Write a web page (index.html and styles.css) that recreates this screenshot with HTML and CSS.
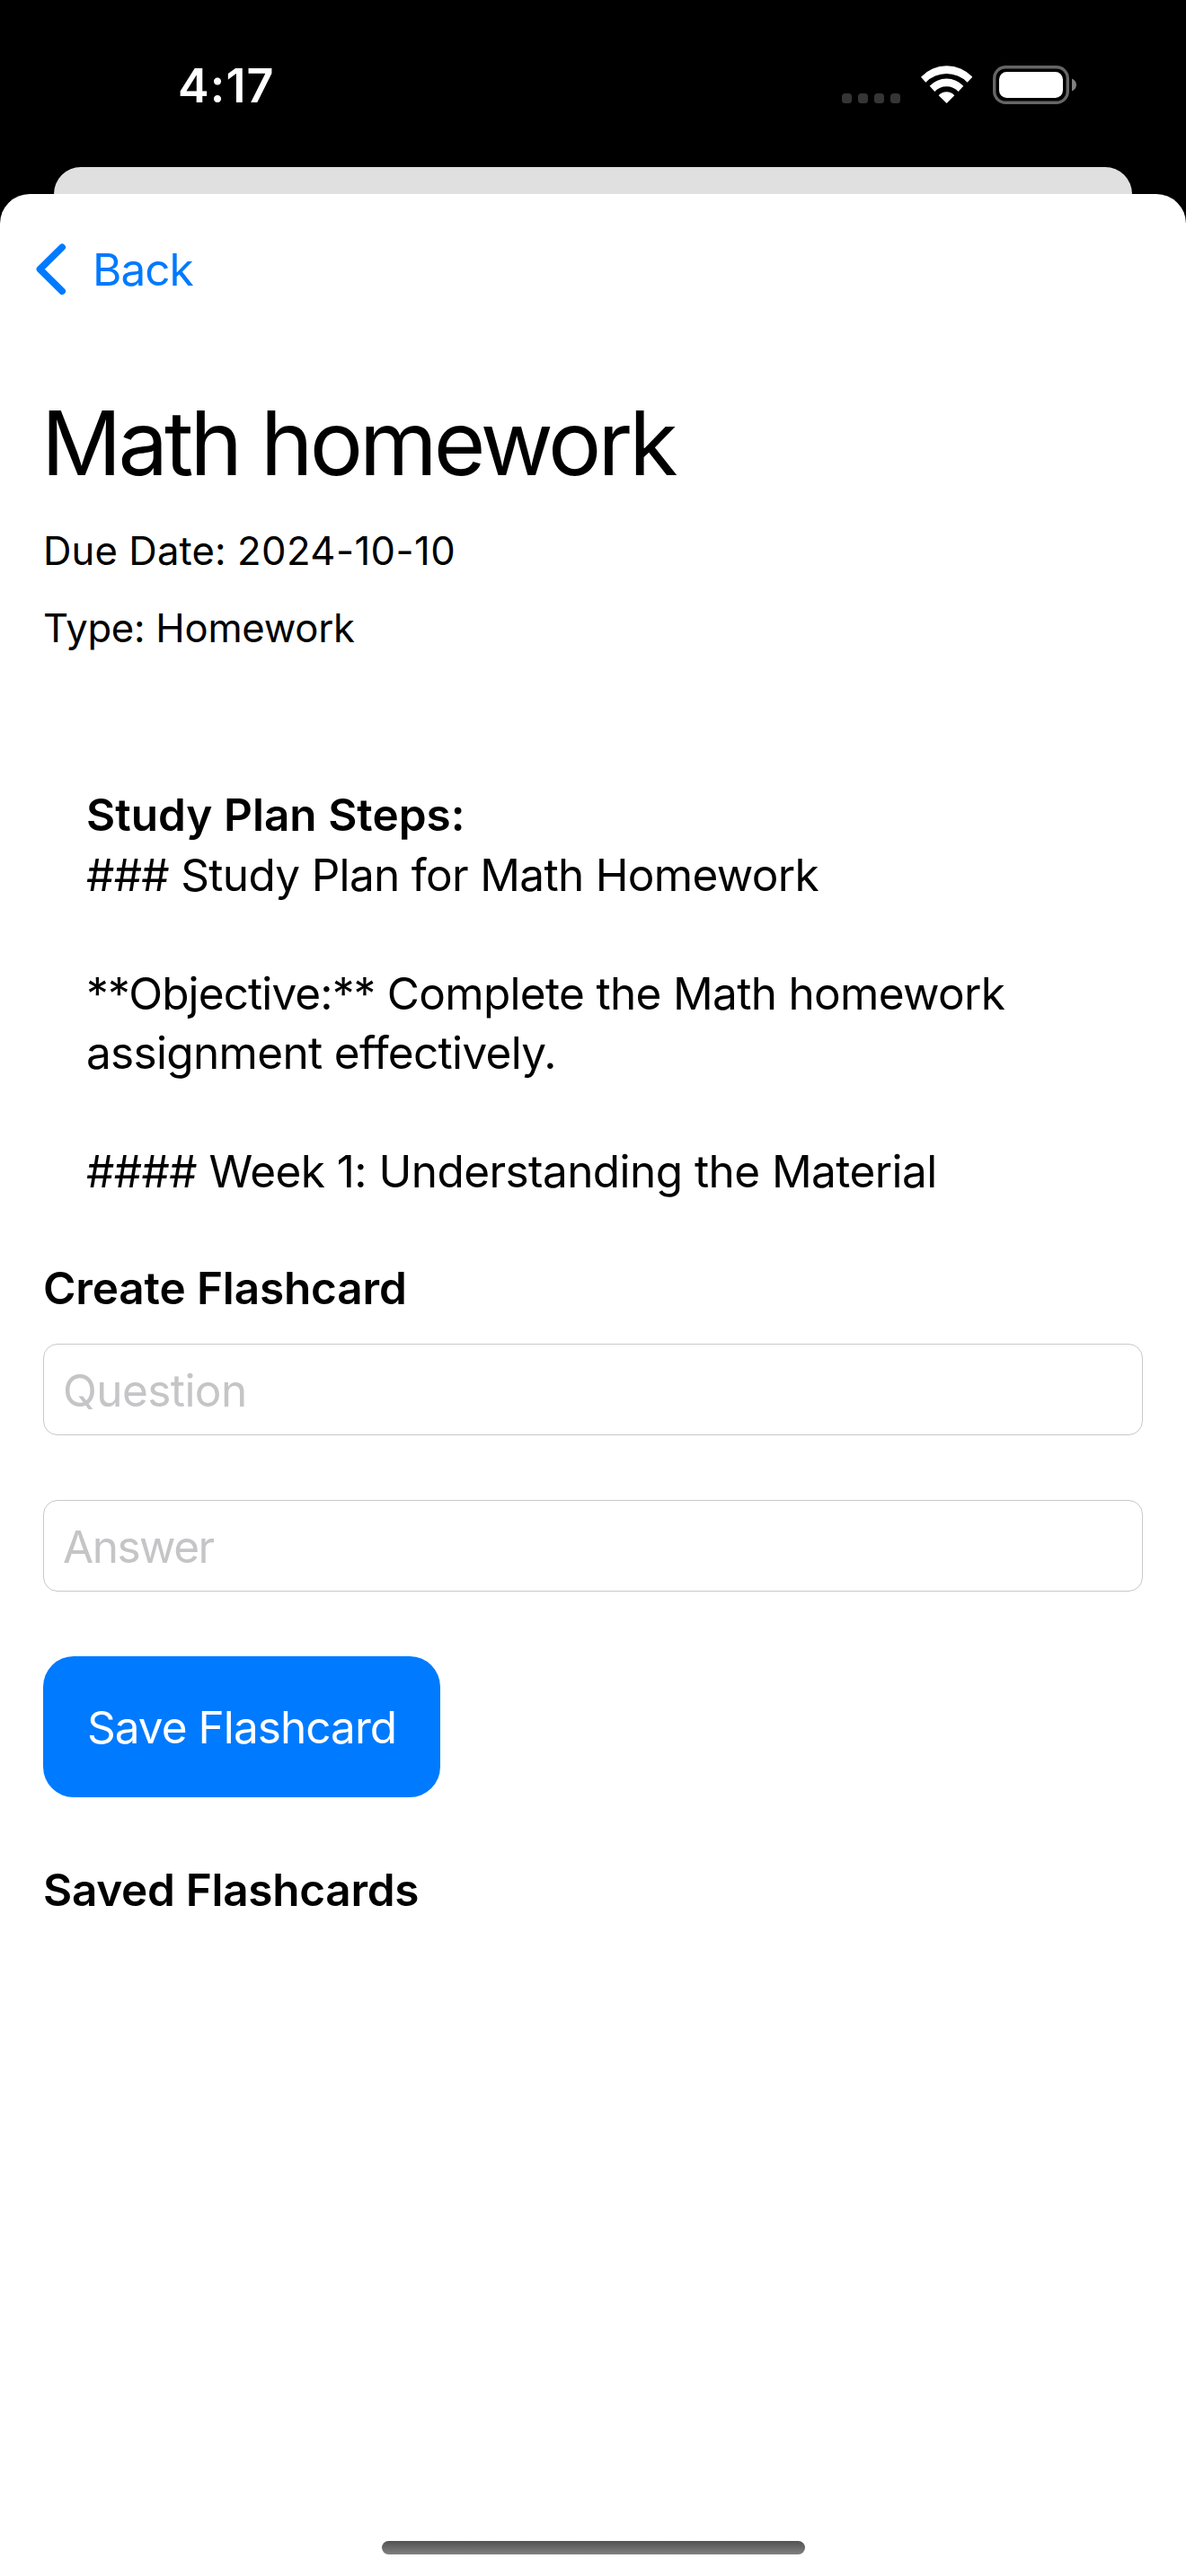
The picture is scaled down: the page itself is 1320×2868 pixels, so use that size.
FILE: index.html
```html
<!DOCTYPE html>
<html lang="en">
<head>
<meta charset="utf-8">
<title>Math homework</title>
<link rel="stylesheet" href="styles.css">
</head>
<body>
<div class="screen">
  <header class="status-bar">
    <span class="time">4:17</span>
    <div class="indicators">
      <div class="signal"><i class="signal-dot"></i><i class="signal-dot"></i><i class="signal-dot"></i><i class="signal-dot"></i></div>
      <svg class="wifi" viewBox="375 99 172 126" fill="#fff" aria-hidden="true">
        <path d="M375 137A118 118 0 0 1 547 137L530 155A98 98 0 0 0 391 155Z"/>
        <path d="M404 167A78 78 0 0 1 517 167L500 186A54 54 0 0 0 421 186Z"/>
        <path d="M434 199A35 35 0 0 1 487 199L461 225Z"/>
      </svg>
      <svg class="battery" viewBox="0 0 93 43" aria-hidden="true">
        <rect x="1.7" y="1.7" width="81.6" height="39.6" rx="12.5" fill="none" stroke="#666" stroke-width="3.4"/>
        <rect x="7" y="7" width="71" height="29" rx="8.5" fill="#fff"/>
        <path d="M88 14.5C91 15.7 93 18.4 93 21.5S91 27.3 88 28.5Z" fill="#808080"/>
      </svg>
    </div>
  </header>
  <div class="sheet-behind"></div>
  <main class="sheet">
    <nav class="nav">
      <svg class="chevron" viewBox="0 0 34 58" fill="none" stroke="#007aff" stroke-width="7.6" stroke-linecap="round" stroke-linejoin="round" aria-hidden="true"><path d="M29.2 4.3L4.4 28.8L29.2 53.2"/></svg>
      <a class="back">Back</a>
    </nav>
    <h1 class="title">Math homework</h1>
    <p class="meta due"><span class="due-label">Due Date: </span>2024-10-10</p>
    <p class="meta type">Type: Homework</p>
    <section class="plan">
      <h2 class="plan-heading">Study Plan Steps:</h2>
      <div class="plan-text">### Study Plan for Math Homework

<span class="objective">**Objective:**</span> Complete the Math homework
assignment effectively.

<span class="week">#### Week 1: Understanding the Material</span></div>
    </section>
    <h2 class="heading">Create Flashcard</h2>
    <form class="form">
      <input class="field question" type="text" placeholder="Question">
      <input class="field answer" type="text" placeholder="Answer">
      <button class="save" type="button">Save Flashcard</button>
    </form>
    <h2 class="heading saved">Saved Flashcards</h2>
    <div class="home-indicator"></div>
  </main>
</div>
</body>
</html>
```
FILE: styles.css
```css
* { box-sizing: border-box; }

body {
  margin: 0;
  background: #000;
  color: #000;
  font-family: Inter, "Liberation Sans", sans-serif;
  font-size: 49.5px;
  line-height: 60px;
}

h1, h2, p { margin: 0; }
svg { display: block; }

.screen {
  display: flex;
  flex-direction: column;
  width: 1320px;
  height: 2868px;
  background: #000;
}

.status-bar {
  display: flex;
  justify-content: space-between;
  height: 186px;
  padding: 66px 122px 0 198px;
  color: #fff;
}
.time { font-size: 52px; font-weight: 600; letter-spacing: 1.1px; }
.indicators { display: flex; align-items: flex-start; padding-top: 7px; }
.signal { display: flex; gap: 7px; margin: 31px 23px 0 0; }
.signal-dot { width: 11px; height: 11px; border-radius: 3.5px; background: #353535; }
.wifi { width: 57.3px; height: 42px; margin-right: 22.7px; }
.battery { width: 93px; height: 43px; }

.sheet-behind {
  height: 30px;
  margin: 0 60px;
  border-radius: 30px 30px 0 0;
  background: #e0e0e0;
}

.sheet {
  display: flex;
  flex-direction: column;
  flex: 1;
  padding: 54px 48px 24px;
  border-radius: 33px 33px 0 0;
  background: #fff;
}

.nav { display: flex; gap: 29px; margin-left: -8px; }
.chevron { width: 34px; height: 58px; margin-top: 1px; }
.back { color: #007aff; letter-spacing: -1px; }

.title {
  margin: 103px 0 0 -2px;
  font-size: 99px;
  font-weight: 400;
  line-height: 120px;
  letter-spacing: -3.95px;
}

.meta { font-size: 43.6px; line-height: 54px; }
.due { margin-top: 34px; letter-spacing: 0.45px; }
.due-label { letter-spacing: 0.1px; }
.type { margin-top: 32px; letter-spacing: -0.25px; }

.plan { height: 530px; padding: 0 48px; margin-top: 147px; }
.plan-heading { font-size: inherit; font-weight: 600; line-height: 67px; letter-spacing: 0.02px; }
.plan-text { white-space: pre-wrap; line-height: 66px; letter-spacing: -0.68px; }
.objective { letter-spacing: -0.9px; }
.week { letter-spacing: -0.56px; }

.heading { font-size: inherit; font-weight: 600; letter-spacing: -0.15px; }

.form {
  display: flex;
  flex-direction: column;
  align-items: flex-start;
  gap: 72px;
  margin-top: 32px;
}
.field {
  width: 100%;
  height: 102px;
  padding: 2px 21px 0;
  border: 1px solid #c8c8ca;
  border-radius: 16px;
  background: #fff;
  font: inherit;
}
.field::placeholder { color: #c5c5c7; opacity: 1; }
.question { letter-spacing: -0.57px; }
.answer { letter-spacing: -1.5px; }

.save {
  width: 442px;
  height: 157px;
  padding: 0;
  border: 0;
  border-radius: 34px;
  background: #007aff;
  color: #fff;
  font: inherit;
  letter-spacing: -0.95px;
}

.saved { margin-top: 73px; letter-spacing: -0.3px; }

.home-indicator {
  width: 471px;
  height: 15px;
  margin: auto auto 0;
  border-radius: 8px;
  background: linear-gradient(#505250, #808080);
}
```
